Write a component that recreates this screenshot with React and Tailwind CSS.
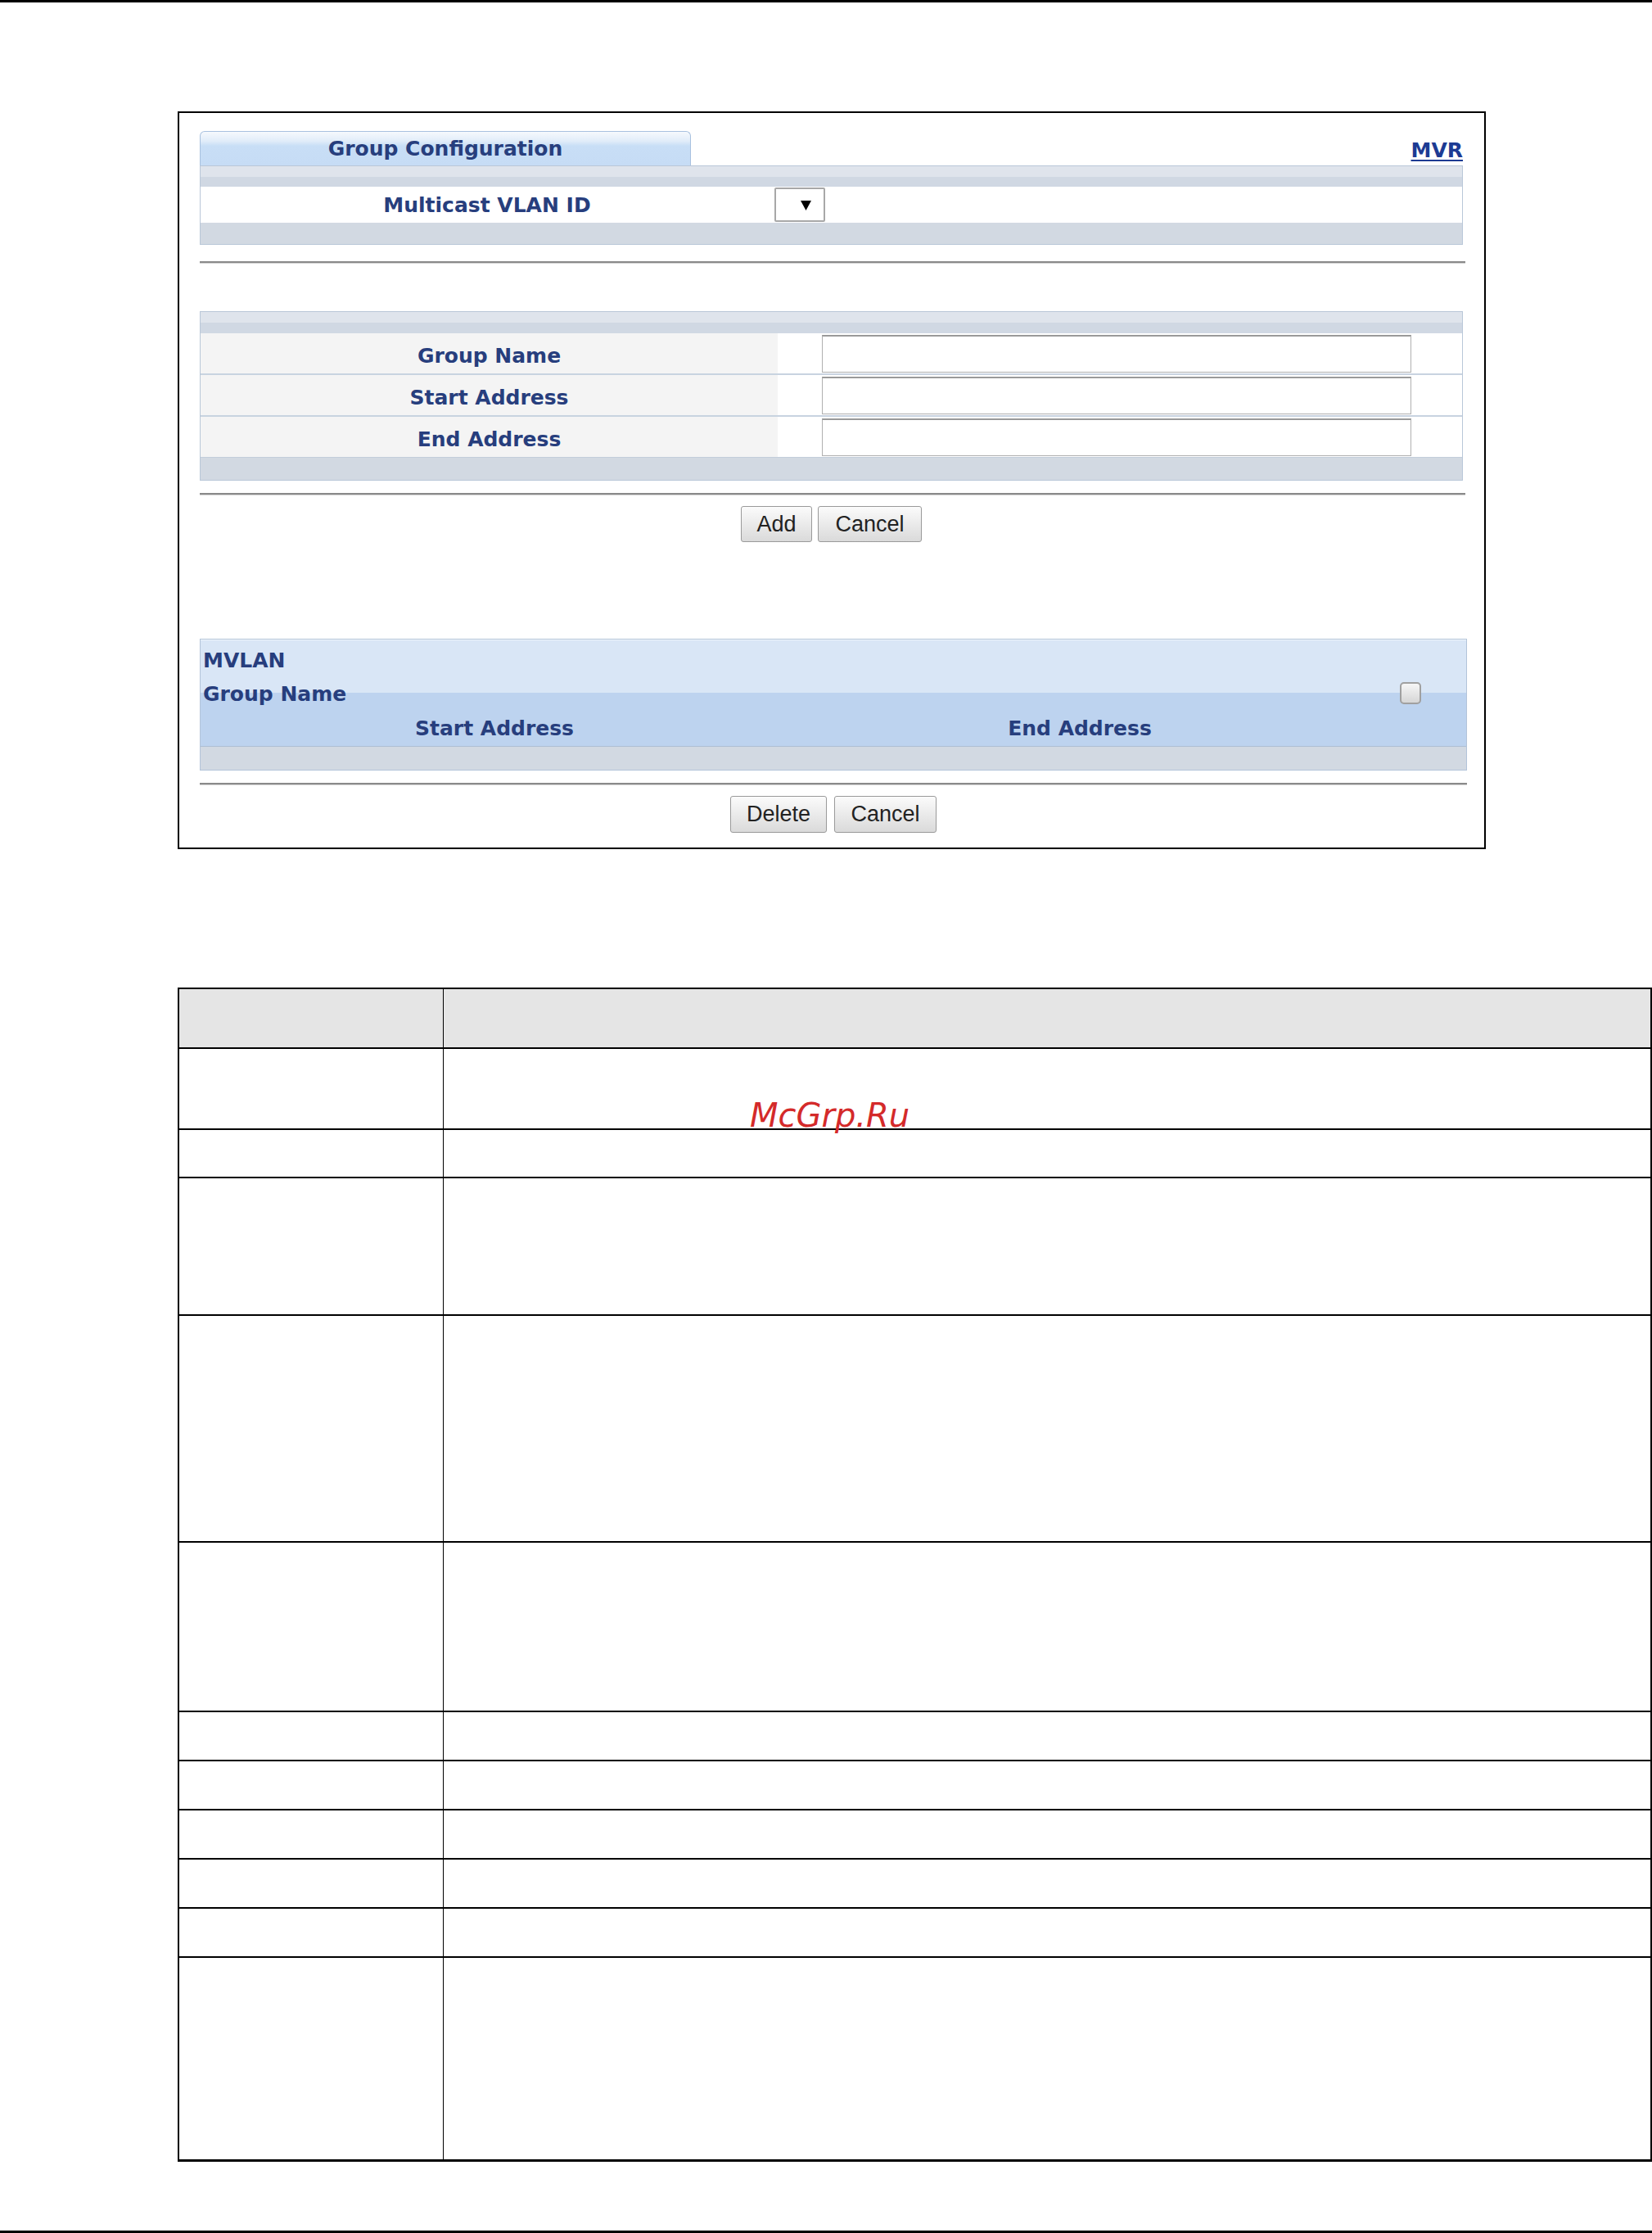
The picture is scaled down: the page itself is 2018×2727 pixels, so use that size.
const FONT = "font-['DejaVu_Sans',Verdana,sans-serif] font-bold text-[25px] text-[#273e7d]";
const LABEL = `${FONT} leading-none`;
const BTN =
  "h-[44px] rounded-[3px] border border-[#9a9a9a] bg-linear-to-b from-[#fbfbfb] to-[#dadada] font-['Liberation_Sans',Arial,sans-serif] text-[27px] text-[#222] leading-none";

const ROWS = [99, 59, 168, 277, 207, 60, 60, 60, 60, 60, 248];

function Rule({ w }) {
  return <div className={`${w} h-[3px] border-t-2 border-t-[#8a8a8a] border-b border-b-[#d3d3d3]`} />;
}

function FieldRow({ label, first }) {
  return (
    <div className={`flex items-center ${first ? 'h-[49px]' : 'h-[51px] border-t-2 border-t-[#c8d3e0]'}`}>
      <div className="w-[705px] self-stretch bg-[#f4f4f4] flex items-center justify-center pt-[5px]">
        <span className={LABEL}>{label}</span>
      </div>
      <div className="w-[54px]" />
      <div className="w-[720px] h-[46px] bg-white border border-[#b0b0b0] border-t-2 border-t-[#9a9a9a]" />
    </div>
  );
}

export default function App() {
  return (
    <div className="w-[2018px] h-[2727px] bg-white relative flex flex-col">
      <div className="h-[3px] bg-black" />

      {/* screenshot frame */}
      <div className="ml-[217px] mt-[133px] w-[1598px] h-[901px] border-2 border-black pl-[25px] pt-[22px]">
        <div className="w-[1543px] flex items-end justify-between">
          <div className="w-[600px] h-[42px] rounded-t-[6px] border border-b-0 border-[#a8c1df] bg-[linear-gradient(to_bottom,#f6f9fd,#e0ecf9_28%,#c8def6_42%,#c6dcf5)] flex items-center justify-center">
            <span className={LABEL}>Group Configuration</span>
          </div>
          <a className="mb-[6px] font-['DejaVu_Sans',Verdana,sans-serif] font-bold text-[25px] leading-none text-[#1d3b93] underline underline-offset-[3px] decoration-2">
            MVR
          </a>
        </div>

        {/* multicast vlan panel */}
        <div className="w-[1543px] border border-[#b9c7d8]">
          <div className="h-[13px] bg-[#dfe4ec]" />
          <div className="h-[12px] bg-[#d0d8e3]" />
          <div className="h-[44px] bg-white flex items-center">
            <div className="w-[700px] text-center pt-[3px]">
              <span className={LABEL}>Multicast VLAN ID</span>
            </div>
            <div className="ml-[1px] w-[62px] h-[42px] rounded-[2px] border-2 border-[#a8a8a8] bg-white flex items-center justify-end pr-[15px]">
              <svg width="13" height="13" viewBox="0 0 13 13">
                <polygon points="0,1 13,1 6.5,13" fill="#000" />
              </svg>
            </div>
          </div>
          <div className="h-[26px] bg-[#d2d9e2]" />
        </div>

        <div className="mt-[20px]">
          <Rule w="w-[1546px]" />
        </div>

        {/* group fields panel */}
        <div className="mt-[58px] w-[1543px] border border-[#b9c7d8]">
          <div className="h-[13px] bg-[#dfe4ec]" />
          <div className="h-[13px] bg-[#d0d8e3]" />
          <div className="bg-white">
            <FieldRow label="Group Name" first />
            <FieldRow label="Start Address" />
            <FieldRow label="End Address" />
          </div>
          <div className="h-[28px] bg-[#d2d9e2] border-t border-t-[#c3cedb]" />
        </div>

        <div className="mt-[15px]">
          <Rule w="w-[1546px]" />
        </div>

        <div className="mt-[13px] w-[1543px] flex justify-center gap-[7px]">
          <button className={`${BTN} w-[87px]`}>Add</button>
          <button className={`${BTN} w-[127px]`}>Cancel</button>
        </div>

        {/* MVLAN list */}
        <div className="mt-[118px] w-[1548px] border border-[#b3c4d9]">
          <div className="h-[130px] flex border-t border-t-[#f1f6fc] bg-[linear-gradient(to_bottom,#d9e6f6_50%,#bdd3ef_50%)]">
            <div className="w-[180px] pl-[3px] pt-[4px]">
              <div className={`${FONT} leading-[41px]`}>MVLAN</div>
              <div className={`${FONT} leading-[41px]`}>Group Name</div>
            </div>
            <div className="w-[358px] self-end pb-[7px] text-center">
              <span className={LABEL}>Start Address</span>
            </div>
            <div className="ml-[186px] w-[700px] self-end pb-[7px] text-center">
              <span className={LABEL}>End Address</span>
            </div>
            <div className="ml-auto mr-[55px] self-center w-[26px] h-[27px] rounded-[5px] border-2 border-[#a0a0a0] bg-linear-to-b from-[#f6f6f6] to-[#d6d6d6]" />
          </div>
          <div className="h-[29px] bg-[#d2d9e2] border-t border-t-[#aebfd4]" />
        </div>

        <div className="mt-[15px]">
          <Rule w="w-[1548px]" />
        </div>

        <div className="mt-[13px] w-[1548px] flex justify-center gap-[9px]">
          <button className={`${BTN} w-[118px] h-[45px]`}>Delete</button>
          <button className={`${BTN} w-[125px] h-[45px]`}>Cancel</button>
        </div>
      </div>

      {/* description table */}
      <div className="ml-[217px] mt-[169px] w-[1801px] border-l-2 border-r-2 border-t-2 border-b-[3px] border-black">
        <div className="h-[71px] flex bg-[#e5e5e5]">
          <div className="w-[323px] border-r border-black" />
          <div className="flex-1" />
        </div>
        {ROWS.map((h, i) => (
          <div key={i} className="flex border-t-2 border-black" style={{ height: h }}>
            <div className="w-[323px] border-r border-black" />
            <div className="flex-1" />
          </div>
        ))}
      </div>

      <div className="absolute left-[916px] top-[1342px] font-['DejaVu_Sans',sans-serif] italic text-[40px] leading-none text-[#d42a2a]">
        McGrp.Ru
      </div>

      <div className="mt-auto h-[3px] bg-black" />
    </div>
  );
}
